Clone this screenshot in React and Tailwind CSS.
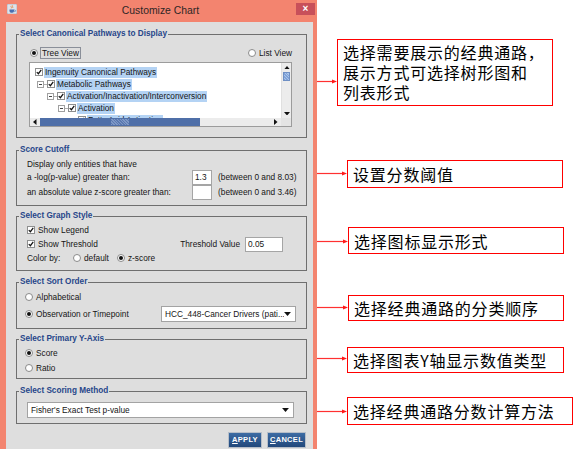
import React from 'react'
import clsx from 'clsx'

const sans = "font-['Liberation_Sans',Arial,sans-serif]"
const cjk = "font-['Noto_Sans_CJK_SC','Noto_Sans_CJK_TC',sans-serif]"

const Check = () => (
  <span className="w-[8px] h-[8px] bg-white border border-[#8e8f8f] flex items-center justify-center shrink-0">
    <svg viewBox="0 0 8 8" className="w-[6px] h-[6px]">
      <path d="M1 4.2 3.2 6.3 7 1.2" stroke="#111" strokeWidth="1.6" fill="none" />
    </svg>
  </span>
)

const Radio = ({ on }) => (
  <span className="w-[8px] h-[8px] rounded-full bg-white border border-[#8a8a8a] flex items-center justify-center shrink-0">
    {on && <span className="w-[4px] h-[4px] rounded-full bg-[#111]" />}
  </span>
)

const Expander = () => (
  <span className="w-[7px] h-[7px] border border-[#a0a0a0] bg-white flex items-center justify-center shrink-0">
    <span className="w-[3px] h-px bg-[#444]" />
  </span>
)

const Tri = ({ dir = 'down', className }) => {
  const pts = {
    down: '0,0 6,0 3,3.5',
    up: '0,3.5 6,3.5 3,0',
    left: '3.5,0 3.5,6 0,3',
    right: '0,0 0,6 3.5,3',
  }[dir]
  const box = dir === 'down' || dir === 'up' ? '0 0 6 3.5' : '0 0 3.5 6'
  return (
    <svg viewBox={box} className={className}>
      <polygon points={pts} fill="#111" />
    </svg>
  )
}

const Input = ({ value, className }) => (
  <span className={clsx('h-[15px] border border-[#a5a5a5] bg-white px-[2px] leading-[13px] shrink-0', className)}>
    {value}
  </span>
)

const Dropdown = ({ value, className }) => (
  <div className={clsx('h-[16px] bg-white border border-[#a3a3a3] flex items-center pl-[3px] pr-[4px]', className)}>
    <span className="flex-1 whitespace-nowrap overflow-hidden">{value}</span>
    <Tri className="w-[7px] h-[4px]" />
  </div>
)

const Group = ({ title, className, children }) => (
  <div className={clsx('relative border border-[#6f6f6f] w-[291px] shrink-0', className)}>
    <span className="absolute left-[2px] top-[-7px] px-[1px] bg-[#dedede] text-[8.2px] leading-[11px] font-bold text-[#27468a] whitespace-nowrap">
      {title}
    </span>
    {children}
  </div>
)

const treeRows = [
  { pad: 'pl-[5px]', exp: false, label: 'Ingenuity Canonical Pathways' },
  { pad: 'pl-[7px]', exp: true, label: 'Metabolic Pathways' },
  { pad: 'pl-[17px]', exp: true, label: 'Activation/Inactivation/Interconversion' },
  { pad: 'pl-[28px]', exp: true, label: 'Activation' },
  { pad: 'pl-[48px]', exp: false, label: 'Fatty Acid Activation' },
]

const notes = [
  { mt: 'mt-[39px]', w: 20, h: 67, y: 42, box: 'w-[216px] h-[67px] items-start pt-[2px]', lines: ['选择需要展示的经典通路，', '展示方式可选择树形图和', '列表形式'] },
  { mt: 'mt-[54px]', w: 30, h: 28, y: 13, box: 'w-[216px] h-[28px] items-center', lines: ['设置分数阈值'] },
  { mt: 'mt-[39px]', w: 31, h: 27, y: 14, box: 'w-[216px] h-[27px] items-center', lines: ['选择图标显示形式'] },
  { mt: 'mt-[41px]', w: 31, h: 26, y: 12, box: 'w-[216px] h-[26px] items-center', lines: ['选择经典通路的分类顺序'] },
  { mt: 'mt-[26px]', w: 30, h: 26, y: 11, box: 'w-[217px] h-[26px] items-center', lines: ['选择图表Y轴显示数值类型'] },
  { mt: 'mt-[24px]', w: 30, h: 28, y: 14, box: 'w-[226px] h-[28px] items-center', lines: ['选择经典通路分数计算方法'] },
]

const Arrow = ({ w, h, y }) => (
  <svg width={w} height={h} className="shrink-0">
    <line x1="0" y1={y + 0.5} x2={w - 3} y2={y + 0.5} stroke="#ff3030" strokeWidth="1.2" />
    <polygon points={`${w - 5},${y - 1.5} ${w},${y + 0.5} ${w - 5},${y + 2.5}`} fill="#ff1a1a" />
  </svg>
)

const JavaIcon = () => (
  <svg viewBox="0 0 10 10" className="w-[10px] h-[10px]">
    <rect x="0" y="0" width="10" height="10" rx="1" fill="#dfe3ea" stroke="#9aa3b2" strokeWidth="0.6" />
    <path d="M2.5 5.5h4.5v1.6a1.6 1.6 0 0 1-1.6 1.6H4.1a1.6 1.6 0 0 1-1.6-1.6z" fill="#4a6fb0" />
    <path d="M7 6h0.8a0.8 0.8 0 0 1 0 1.6H7" stroke="#4a6fb0" strokeWidth="0.6" fill="none" />
    <path d="M4.2 1.8c-0.8 0.8 0.8 1.4 0 2.6M5.6 1.4c-0.8 0.8 0.8 1.4 0 2.6" stroke="#e0782a" strokeWidth="0.7" fill="none" />
  </svg>
)

const App = () => {
  return (
    <div className={clsx('w-[573px] h-[449px] bg-white flex overflow-hidden', sans)}>
      {/* Dialog */}
      <div className="w-[317px] h-[449px] bg-[#f3846f] flex flex-col shrink-0">
        <div className="h-[22px] flex items-start shrink-0">
          <div className="pl-[7px] pt-[4px]">
            <JavaIcon />
          </div>
          <div className="flex-1 text-center pl-[8px] pt-[5px] text-[10.4px] leading-[12px] text-[#2e2626]">
            Customize Chart
          </div>
          <div className="mt-[3px] mr-[2px] w-[19px] h-[12px] bg-[#c8505a] flex items-center justify-center text-white text-[10px] font-bold leading-none">
            ×
          </div>
        </div>

        <div className="flex-1 ml-[6px] mr-[4px] bg-[#dedede] flex flex-col pl-[10px] pr-[7px] text-[8.3px] text-[#151515]">
          {/* Canonical pathways */}
          <Group title="Select Canonical Pathways to Display" className="mt-[12px] h-[104px]">
            <div className="mt-[12px] h-[12px] flex items-center pl-[13px] pr-[14px]">
              <Radio on />
              <span className="ml-[2px] border border-[#8a8f99] px-[1px] leading-[10px]">Tree View</span>
              <span className="flex-1" />
              <Radio />
              <span className="ml-[3px]">List View</span>
            </div>
            <div className="mt-[3px] ml-[12px] w-[263px] h-[65px] border border-[#9c9c9c] bg-white flex flex-col">
              <div className="flex h-[55px]">
                <div className="flex-1 overflow-hidden pt-[3px]">
                  {treeRows.map((r) => (
                    <div key={r.label} className={clsx('h-[12px] flex items-center whitespace-nowrap', r.pad)}>
                      {r.exp && (
                        <>
                          <Expander />
                          <span className="w-[3px] h-px bg-[#b0b0b0]" />
                        </>
                      )}
                      <Check />
                      <span className="ml-px bg-[#b4d3f4] px-px leading-[11px]">{r.label}</span>
                    </div>
                  ))}
                </div>
                <div className="w-[10px] bg-[#ececec] border-l border-[#e0e0e0] flex flex-col">
                  <div className="h-[9px] flex items-center justify-center">
                    <Tri dir="up" className="w-[6px] h-[3.5px]" />
                  </div>
                  <div className="h-[9px] mx-px bg-[repeating-linear-gradient(45deg,#7fa2d8_0_1px,#a9c4ea_1px_2px)] border border-[#6e8fc4]" />
                  <div className="flex-1" />
                  <div className="h-[9px] flex items-center justify-center">
                    <Tri className="w-[6px] h-[3.5px]" />
                  </div>
                </div>
              </div>
              <div className="h-[8px] flex bg-[#ececec]">
                <div className="w-[10px] flex items-center justify-center">
                  <Tri dir="left" className="w-[3.5px] h-[6px]" />
                </div>
                <div className="flex-1 flex">
                  <div className="w-[160px] bg-[#4f6fa8] flex items-center justify-center">
                    <div className="w-[18px] h-[6px] bg-[repeating-linear-gradient(45deg,#7e98c6_0_1px,#5b79b0_1px_2px)]" />
                  </div>
                </div>
                <div className="w-[10px] flex items-center justify-center">
                  <Tri dir="right" className="w-[3.5px] h-[6px]" />
                </div>
                <div className="w-[10px] bg-[#e4e4e4]" />
              </div>
            </div>
          </Group>

          {/* Score cutoff */}
          <Group title="Score Cutoff" className="mt-[12px] h-[56px]">
            <div className="pl-[10px] pt-[7px]">
              <div className="h-[12px] leading-[12px]">Display only entities that have</div>
              <div className="h-[15px] flex items-center">
                <span className="w-[165px]">a -log(p-value) greater than:</span>
                <Input value="1.3" className="w-[20px]" />
                <span className="ml-[6px]">(between 0 and 8.03)</span>
              </div>
              <div className="h-[15px] flex items-center">
                <span className="w-[165px]">an absolute value z-score greater than:</span>
                <Input value="" className="w-[20px]" />
                <span className="ml-[6px]">(between 0 and 3.46)</span>
              </div>
            </div>
          </Group>

          {/* Graph style */}
          <Group title="Select Graph Style" className="mt-[10px] h-[55px]">
            <div className="pl-[10px] pt-[6px]">
              <div className="h-[14px] flex items-center">
                <Check />
                <span className="ml-[3px]">Show Legend</span>
              </div>
              <div className="h-[14px] flex items-center pr-[23px]">
                <Check />
                <span className="ml-[3px]">Show Threshold</span>
                <span className="flex-1" />
                <span>Threshold Value</span>
                <Input value="0.05" className="ml-[5px] w-[38px]" />
              </div>
              <div className="h-[14px] flex items-center">
                <span className="w-[46px]">Color by:</span>
                <Radio />
                <span className="ml-[3px]">default</span>
                <span className="ml-[8px]">
                  <Radio on />
                </span>
                <span className="ml-[3px]">z-score</span>
              </div>
            </div>
          </Group>

          {/* Sort order */}
          <Group title="Select Sort Order" className="mt-[11px] h-[47px]">
            <div className="pl-[8px] pt-[8px]">
              <div className="h-[12px] flex items-center">
                <Radio />
                <span className="ml-[3px]">Alphabetical</span>
              </div>
              <div className="mt-[3px] h-[16px] flex items-center pr-[10px]">
                <Radio on />
                <span className="ml-[3px]">Observation or Timepoint</span>
                <span className="flex-1" />
                <Dropdown value="HCC_448-Cancer Drivers (pati..." className="w-[135px]" />
              </div>
            </div>
          </Group>

          {/* Primary Y axis */}
          <Group title="Select Primary Y-Axis" className="mt-[10px] h-[40px]">
            <div className="pl-[8px] pt-[6px]">
              <div className="h-[14px] flex items-center">
                <Radio on />
                <span className="ml-[3px]">Score</span>
              </div>
              <div className="mt-px h-[14px] flex items-center">
                <Radio />
                <span className="ml-[3px]">Ratio</span>
              </div>
            </div>
          </Group>

          {/* Scoring method */}
          <Group title="Select Scoring Method" className="mt-[12px] h-[33px]">
            <div className="pl-[10px] pr-[12px] pt-[10px]">
              <Dropdown value="Fisher's Exact Test p-value" />
            </div>
          </Group>

          <div className="mt-[8px] flex justify-end gap-[5px]">
            <button className="h-[16px] w-[34px] border border-[#b7bec8] bg-linear-to-b from-[#3d6ca4] to-[#22487b] text-white font-bold text-[7.5px] tracking-[0.3px]">
              <span className="underline">A</span>PPLY
            </button>
            <button className="h-[16px] w-[39px] border border-[#b7bec8] bg-linear-to-b from-[#3d6ca4] to-[#22487b] text-white font-bold text-[7.5px] tracking-[0.3px]">
              <span className="underline">C</span>ANCEL
            </button>
          </div>
        </div>
      </div>

      {/* Annotations */}
      <div className={clsx('flex-1 flex flex-col', cjk)}>
        {notes.map((n) => (
          <div key={n.lines[0]} className={clsx('flex shrink-0', n.mt)}>
            <Arrow w={n.w} h={n.h} y={n.y} />
            <div className={clsx('flex border border-[#ff0000] bg-white pl-[5px] text-[16px] tracking-[0.8px] leading-[20px] text-black whitespace-nowrap', n.box)}>
              <div>
                {n.lines.map((l) => (
                  <div key={l}>{l}</div>
                ))}
              </div>
            </div>
          </div>
        ))}
      </div>
    </div>
  )
}

export default App
